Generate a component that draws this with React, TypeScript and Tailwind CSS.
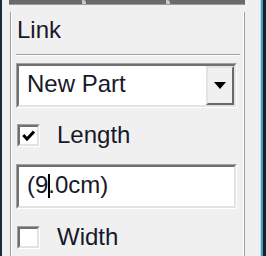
import React from "react";

const font = { fontFamily: '"Liberation Sans", Arial, sans-serif' };

// sunken 3d frame used by edit, combo and checkbox
const Sunken = ({ className, children }: { className: string; children?: React.ReactNode }) => (
  <div className={"border border-t-[#a0a0a0] border-l-[#a0a0a0] border-r-white border-b-white " + className}>
    <div className="w-full h-full border-2 border-t-[#707070] border-l-[#707070] border-r-[#e3e3e3] border-b-[#e3e3e3] bg-white flex">
      {children}
    </div>
  </div>
);

const CheckBox = ({ label, checked }: { label: string; checked?: boolean }) => (
  <div className="flex items-center h-[26px] pl-[1px]">
    <Sunken className="w-[23px] h-[23px]">
      <div className="flex-1 flex items-center justify-center">
        {checked && (
          <svg width="13" height="11" viewBox="0 0 13 11">
            <path d="M1.3 5 L5 9 L12 1.5" fill="none" stroke="#000" strokeWidth="3" />
          </svg>
        )}
      </div>
    </Sunken>
    <span className="ml-[17px] text-[24px] leading-[26px] text-[#18182a]">{label}</span>
  </div>
);

export default function App() {
  return (
    <div className="w-[266px] h-[256px] bg-[#f0f0f0] flex overflow-hidden select-none" style={font}>
      <div className="w-[2px] bg-[#1d2838]" />
      <div className="flex-1 flex flex-col">
        <div className="h-[5px] ml-[7px] mr-[15px] bg-[#6a6a6a] border-b border-[#9a9a9a] flex">
          <div className="w-[73px]" />
          <div className="w-[4px] h-[4px] bg-[#c8c8c8] rounded-tr-[3px]" />
          <div className="w-[80px]" />
          <div className="w-[4px] h-[4px] bg-[#c8c8c8] rounded-tr-[3px]" />
        </div>
        <div className="flex-1 flex mt-[7px]">
          <div className="w-[8px]" />
          <div className="flex-1 flex border-l border-r border-[#a0a0a0]">
            <div className="flex-1 flex flex-col border-l border-r border-white pl-[4px] pr-[6px] pt-[5px]">
              <div className="text-[24px] leading-[26px] text-[#18182a] pl-[1px]">Link</div>
              <div className="mt-[11px] -mr-[3px] border-t border-b border-t-[#a0a0a0] border-b-white" />
              <Sunken className="mt-[7px] h-[45px]">
                <div className="flex-1 flex items-center pl-[8px] pb-[3px] text-[24px] leading-[26px] text-[#18182a]">
                  New Part
                </div>
                <div className="w-[28px] border-2 border-t-[#e3e3e3] border-l-[#e3e3e3] border-r-[#696969] border-b-[#696969] bg-[#f0f0f0] flex items-center justify-center">
                  <svg width="12" height="7" viewBox="0 0 12 7">
                    <polygon points="0,0 12,0 6,7" fill="#000" />
                  </svg>
                </div>
              </Sunken>
              <div className="mt-[14px]">
                <CheckBox label="Length" checked />
              </div>
              <Sunken className="mt-[16px] h-[45px]">
                <div className="flex-1 flex items-center pl-[8px] pb-[3px] text-[24px] leading-[26px] text-[#18182a]">
                  <span>(9</span>
                  <span className="w-[2px] h-[24px] bg-black -mr-[2px] mt-[1px]" />
                  <span>.0cm)</span>
                </div>
              </Sunken>
              <div className="mt-[15px]">
                <CheckBox label="Width" />
              </div>
            </div>
          </div>
          <div className="w-[15px]" />
        </div>
      </div>
      <div className="w-[1px] bg-[#c4dbe6]" />
      <div className="w-[2px] bg-[#3c9fc6]" />
      <div className="w-[3px] bg-[#16202c]" />
    </div>
  );
}
